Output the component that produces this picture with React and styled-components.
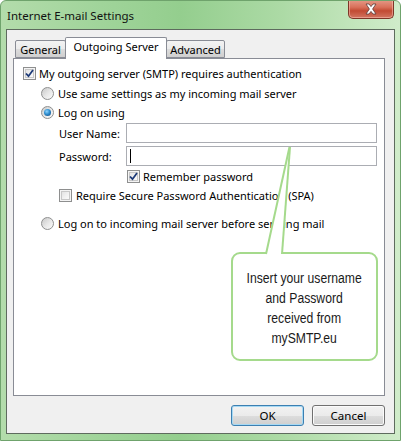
import React from 'react';
import styled, { createGlobalStyle } from 'styled-components';

const GlobalStyle = createGlobalStyle`
  html, body {
    margin: 0;
    padding: 0;
    background: #ffffff;
  }
  body {
    font-family: "Noto Sans", "Liberation Sans", sans-serif;
    font-size: 11px;
    color: #000;
  }
`;

const Window = styled.div`
  position: relative;
  width: 401px;
  height: 441px;
  box-sizing: border-box;
  border: 1px solid #6fa36c;
  border-radius: 6px 6px 0 0;
  background: linear-gradient(90deg, #b3dcab 0%, #a0d49a 25%, #94ce8e 45%, #acdaa5 70%, #d0ecca 100%);
  display: flex;
  flex-direction: column;
  overflow: hidden;
`;

const TitleBar = styled.div`
  height: 28px;
  display: flex;
  align-items: center;
  justify-content: space-between;
  padding-left: 6px;
  font-size: 11.5px;
  color: #111;
`;

const CloseButton = styled.div`
  align-self: flex-start;
  margin-top: -1px;
  margin-right: 6px;
  width: 46px;
  height: 19px;
  box-sizing: border-box;
  border: 1px solid #7d3527;
  border-top: none;
  border-radius: 0 0 5px 5px;
  background: linear-gradient(180deg, #e59a88 0%, #d9705a 40%, #c24a33 60%, #d27560 100%);
  box-shadow: inset 0 0 0 1px rgba(255, 200, 190, 0.5);
  display: flex;
  align-items: center;
  justify-content: center;
`;

const Client = styled.div`
  flex: 1;
  margin: 0 5px 6px 5px;
  border: 1px solid #5e6b5e;
  background: #f0f0f0;
  padding: 7px 9px 7px 6px;
  display: flex;
  flex-direction: column;
`;

const TabStrip = styled.div`
  display: flex;
  align-items: flex-end;
  height: 21px;
  padding-left: 2px;
  position: relative;
  z-index: 1;
`;

const Tab = styled.div`
  box-sizing: border-box;
  width: ${(p) => p.$w}px;
  height: ${(p) => (p.$active ? '22px' : '18px')};
  margin-bottom: ${(p) => (p.$active ? '-1px' : '0')};
  padding-top: ${(p) => (p.$active ? '1px' : '0')};
  border: 1px solid #898c95;
  border-bottom: ${(p) => (p.$active ? 'none' : '1px solid #898c95')};
  background: ${(p) => (p.$active ? '#ffffff' : 'linear-gradient(180deg, #f3f3f3 0%, #ebebeb 50%, #dddddd 51%, #cfcfcf 100%)')};
  border-radius: 2px 2px 0 0;
  display: flex;
  justify-content: center;
  align-items: ${(p) => (p.$active ? 'flex-start' : 'center')};
  font-size: 11px;
  color: #000;
  white-space: nowrap;
  & + & {
    margin-left: -1px;
  }
`;

const Panel = styled.div`
  height: 338px;
  box-sizing: border-box;
  border: 1px solid #898c95;
  background: #ffffff;
  display: flex;
  flex-direction: column;
`;

const Row = styled.div`
  display: flex;
  align-items: center;
  height: ${(p) => p.$h ?? 19}px;
  margin-top: ${(p) => p.$mt ?? 0}px;
  padding-left: ${(p) => p.$indent ?? 0}px;
  gap: ${(p) => p.$gap ?? 4}px;
  white-space: nowrap;
`;

const Box = styled.span`
  display: inline-flex;
  align-items: center;
  justify-content: center;
  width: 13px;
  height: 13px;
  box-sizing: border-box;
  border: 1px solid #8e8f8f;
  background: linear-gradient(135deg, #dcdcdc 0%, #f4f4f4 60%, #ffffff 100%);
  box-shadow: inset 0 0 0 1px #f4f4f4, inset 0 0 0 2px #c8c8c8;
  flex: none;
`;

const Radio = styled.span`
  position: relative;
  display: inline-block;
  width: 13px;
  height: 13px;
  box-sizing: border-box;
  border-radius: 50%;
  border: 1px solid #8e8f8f;
  background: linear-gradient(135deg, #c9c9c9 0%, #e9e9e9 55%, #fbfbfb 100%);
  flex: none;
  &::after {
    content: '';
    display: ${(p) => (p.$checked ? 'block' : 'none')};
    position: absolute;
    left: 2px;
    top: 2px;
    width: 7px;
    height: 7px;
    border-radius: 50%;
    background: radial-gradient(circle at 40% 35%, #8fd4ff 0%, #2f8fd0 45%, #0d3f76 100%);
  }
`;

const Label = styled.span`
  font-size: 11px;
  color: #000;
`;

const FieldLabel = styled.span`
  width: 67px;
  flex: none;
  font-size: 11px;
  color: #000;
`;

const Input = styled.div`
  width: 251px;
  height: 20px;
  flex: none;
  box-sizing: border-box;
  border: 1px solid #abadb3;
  background: #fff;
  display: flex;
  align-items: center;
  padding-left: 3px;
`;

const Caret = styled.span`
  width: 1px;
  height: 14px;
  background: #000;
`;

const ButtonRow = styled.div`
  display: flex;
  justify-content: flex-end;
  gap: 8px;
  margin-top: 9px;
`;

const Button = styled.div`
  width: 73px;
  height: 21px;
  box-sizing: border-box;
  border: 1px solid ${(p) => (p.$default ? '#3c7fb1' : '#707070')};
  border-radius: 3px;
  background: linear-gradient(180deg, #f2f2f2 0%, #ebebeb 50%, #dddddd 51%, #cfcfcf 100%);
  box-shadow: ${(p) => (p.$default ? 'inset 0 0 0 1px #a6d9f4' : 'inset 0 0 0 1px #fbfbfb')};
  display: flex;
  align-items: center;
  justify-content: center;
  font-size: 11.5px;
  color: #000;
`;

const Callout = styled.div`
  position: absolute;
  left: 230px;
  top: 251px;
  width: 147px;
  height: 109px;
  box-sizing: border-box;
  border: 2px solid #a5da8c;
  border-radius: 9px;
  background: #fff;
  display: flex;
  align-items: center;
  justify-content: center;
  text-align: center;
  font-family: "Liberation Sans", sans-serif;
  font-size: 14px;
  line-height: 20px;
  color: #1a1a1a;
  padding-top: 2px;
`;

const CalloutText = styled.div`
  transform: scaleX(0.87);
  white-space: nowrap;
`;

const Pointer = styled.svg`
  position: absolute;
  left: 258px;
  top: 140px;
  overflow: visible;
`;

const Check = () => (
  <svg width="9" height="9" viewBox="0 0 9 9">
    <path d="M1 4.5 L3.5 7.2 L8 1" fill="none" stroke="#1d3a78" strokeWidth="1.8" />
  </svg>
);

const CloseX = () => (
  <svg width="14" height="12" viewBox="0 0 14 12">
    <path
      d="M2 1 L5 1 L7 3.6 L9 1 L12 1 L8.6 6 L12 11 L9 11 L7 8.4 L5 11 L2 11 L5.4 6 Z"
      fill="#ffffff"
      stroke="#5a3a36"
      strokeWidth="0.8"
      strokeLinejoin="round"
    />
  </svg>
);

export default function App() {
  return (
    <>
      <GlobalStyle />
      <Window>
        <TitleBar>
          <span>Internet E-mail Settings</span>
          <CloseButton>
            <CloseX />
          </CloseButton>
        </TitleBar>
        <Client>
          <TabStrip>
            <Tab $w={51}>General</Tab>
            <Tab $w={102} $active>Outgoing Server</Tab>
            <Tab $w={59}>Advanced</Tab>
          </TabStrip>
          <Panel>
            <Row $mt={5} $indent={9} $gap={3}>
              <Box><Check /></Box>
              <Label>My outgoing server (SMTP) requires authentication</Label>
            </Row>
            <Row $mt={1} $indent={27} $gap={4}>
              <Radio />
              <Label>Use same settings as my incoming mail server</Label>
            </Row>
            <Row $indent={27} $gap={4}>
              <Radio $checked />
              <Label>Log on using</Label>
            </Row>
            <Row $h={20} $mt={1} $indent={45} $gap={0}>
              <FieldLabel>User Name:</FieldLabel>
              <Input />
            </Row>
            <Row $h={20} $mt={3} $indent={45} $gap={0}>
              <FieldLabel>Password:</FieldLabel>
              <Input>
                <Caret />
              </Input>
            </Row>
            <Row $mt={1} $indent={113} $gap={3}>
              <Box><Check /></Box>
              <Label>Remember password</Label>
            </Row>
            <Row $indent={45} $gap={4}>
              <Box />
              <Label>Require Secure Password Authentication (SPA)</Label>
            </Row>
            <Row $mt={9} $indent={27} $gap={4}>
              <Radio />
              <Label>Log on to incoming mail server before sending mail</Label>
            </Row>
          </Panel>
          <ButtonRow>
            <Button $default>OK</Button>
            <Button>Cancel</Button>
          </ButtonRow>
        </Client>
        <Callout>
          <CalloutText>
            Insert your username
            <br />
            and Password
            <br />
            received from
            <br />
            mySMTP.eu
          </CalloutText>
        </Callout>
        <Pointer width="40" height="118" viewBox="0 0 40 118">
          <polygon points="7,113 30.5,6 23,113" fill="#ffffff" />
          <line x1="7" y1="113" x2="30.5" y2="6" stroke="#a5da8c" strokeWidth="2" />
          <line x1="23" y1="113" x2="31" y2="6" stroke="#a5da8c" strokeWidth="2" />
        </Pointer>
      </Window>
    </>
  );
}
